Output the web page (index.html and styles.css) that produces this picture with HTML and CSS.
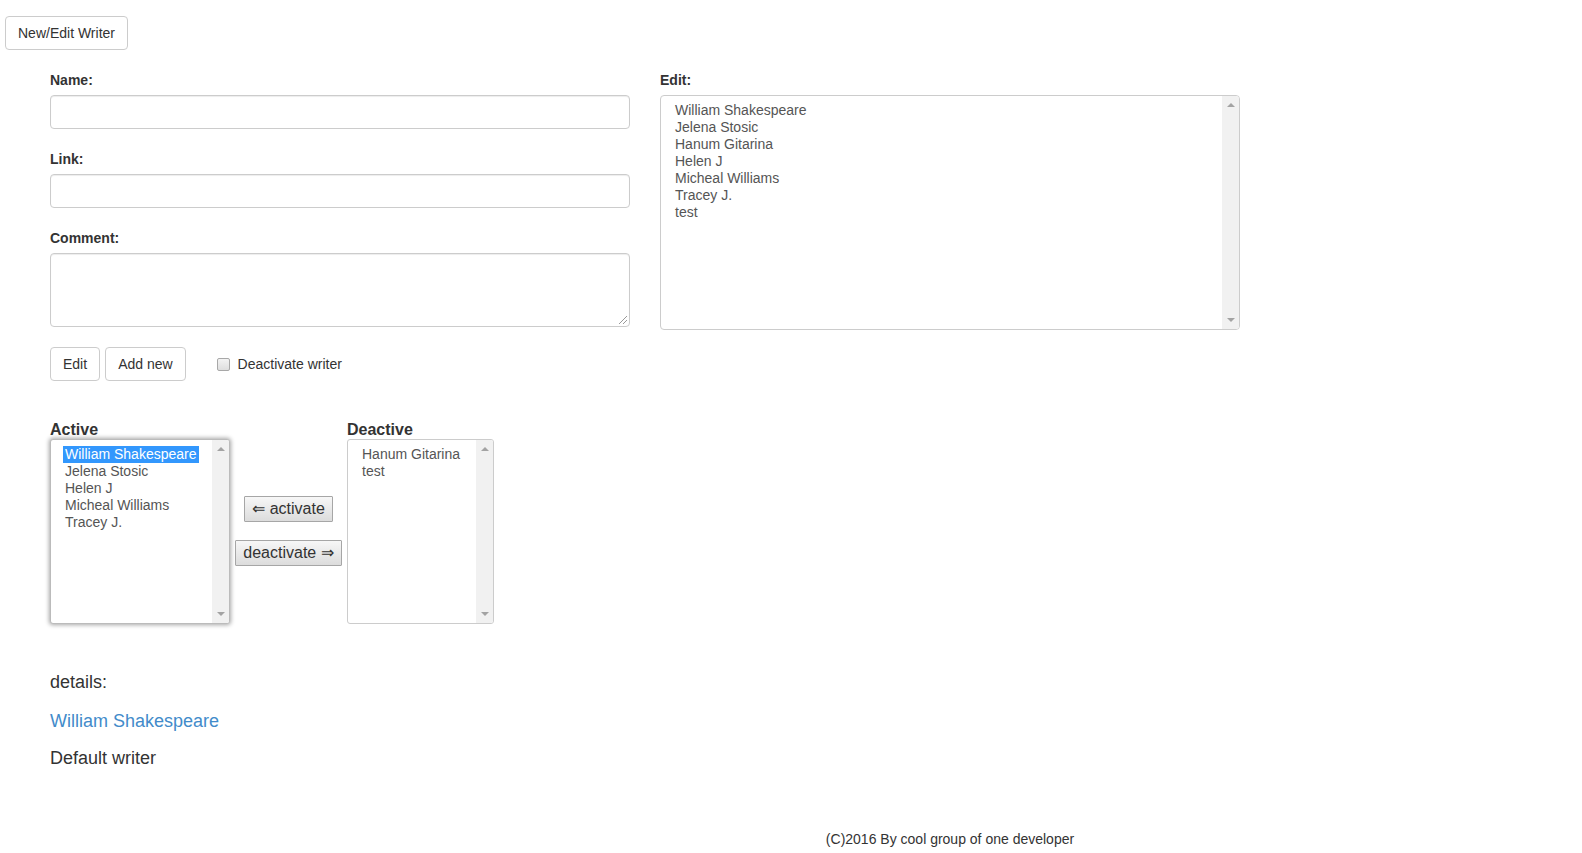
FILE: index.html
```html
<!DOCTYPE html>
<html>
<head>
<meta charset="utf-8">
<title>Writers</title>
<link rel="stylesheet" href="styles.css">
</head>
<body>
<div class="topbar">
  <button class="btn">New/Edit Writer</button>
</div>

<div class="main">
  <div class="form-row">
    <div class="col">
      <div class="group">
        <label class="lbl">Name:</label>
        <div class="input"></div>
      </div>
      <div class="group">
        <label class="lbl">Link:</label>
        <div class="input"></div>
      </div>
      <div class="group">
        <label class="lbl">Comment:</label>
        <div class="textarea"><span class="grip"></span></div>
      </div>
      <div class="actions">
        <button class="btn">Edit</button>
        <button class="btn">Add new</button>
        <span class="check"><span class="box"></span>Deactivate writer</span>
      </div>
    </div>
    <div class="col">
      <div class="group">
        <label class="lbl">Edit:</label>
        <div class="listbox edit-list">
          <div class="items">
            <div class="opt">William Shakespeare</div>
            <div class="opt">Jelena Stosic</div>
            <div class="opt">Hanum Gitarina</div>
            <div class="opt">Helen J</div>
            <div class="opt">Micheal Williams</div>
            <div class="opt">Tracey J.</div>
            <div class="opt">test</div>
          </div>
          <div class="sbar"><span class="up"></span><span class="down"></span></div>
        </div>
      </div>
    </div>
  </div>

  <div class="swap-row">
    <div class="swap-col">
      <div class="swap-title">Active</div>
      <div class="listbox active-list focused">
        <div class="items">
          <div class="opt sel">William Shakespeare</div>
          <div class="opt">Jelena Stosic</div>
          <div class="opt">Helen J</div>
          <div class="opt">Micheal Williams</div>
          <div class="opt">Tracey J.</div>
        </div>
        <div class="sbar"><span class="up"></span><span class="down"></span></div>
      </div>
    </div>
    <div class="swap-buttons">
      <button class="gbtn">&#8656; activate</button>
      <button class="gbtn">deactivate &#8658;</button>
    </div>
    <div class="swap-col">
      <div class="swap-title">Deactive</div>
      <div class="listbox deactive-list">
        <div class="items">
          <div class="opt">Hanum Gitarina</div>
          <div class="opt">test</div>
        </div>
        <div class="sbar"><span class="up"></span><span class="down"></span></div>
      </div>
    </div>
  </div>

  <div class="details">
    <p class="d-title">details:</p>
    <p class="d-link"><a href="#">William Shakespeare</a></p>
    <p class="d-text">Default writer</p>
  </div>
</div>

<footer class="footer">(C)2016 By cool group of one developer</footer>
</body>
</html>
```

FILE: styles.css
```css
html, body {
  margin: 0;
  padding: 0;
  background: #fff;
}
body {
  font-family: "Liberation Sans", Arial, Helvetica, sans-serif;
  font-size: 14px;
  line-height: 20px;
  color: #333;
}
.topbar {
  padding: 16px 0 0 5px;
}
.btn {
  font-family: inherit;
  font-size: 14px;
  line-height: 20px;
  color: #333;
  background: #fff;
  border: 1px solid #ccc;
  border-radius: 4px;
  padding: 6px 12px;
  height: 34px;
  cursor: pointer;
}
.main {
  padding-left: 50px;
}
.form-row {
  display: flex;
  gap: 30px;
  margin-top: 20px;
}
.col {
  width: 580px;
  flex-shrink: 0;
}
.group {
  margin-bottom: 20px;
}
.lbl {
  display: block;
  font-weight: bold;
  margin-bottom: 5px;
  height: 20px;
}
.input {
  height: 32px;
  border: 1px solid #ccc;
  border-radius: 4px;
  box-shadow: inset 0 1px 1px rgba(0,0,0,.075);
}
.textarea {
  position: relative;
  height: 72px;
  border: 1px solid #ccc;
  border-radius: 4px;
  box-shadow: inset 0 1px 1px rgba(0,0,0,.075);
}
.grip {
  position: absolute;
  right: 2px;
  bottom: 2px;
  width: 8px;
  height: 8px;
  background: linear-gradient(135deg, transparent 45%, #999 45%, #999 52%, transparent 52%, transparent 70%, #999 70%, #999 78%, transparent 78%);
}
.actions {
  display: flex;
  align-items: center;
  gap: 5px;
  margin-top: 20px;
}
.check {
  display: flex;
  align-items: center;
  margin-left: 26px;
  color: #333;
}
.box {
  width: 11px;
  height: 11px;
  border: 1px solid #a8a8a8;
  border-radius: 2px;
  background: linear-gradient(#f3f3f3, #dedede);
  margin-right: 8px;
}
.listbox {
  display: flex;
  border: 1px solid #ccc;
  border-radius: 4px;
  background: #fff;
  overflow: hidden;
  color: #555;
}
.listbox .items {
  flex: 1;
  padding: 6px 12px;
  line-height: 17px;
}
.opt {
  padding: 0 2px;
  white-space: nowrap;
}
.opt.sel {
  display: inline-block;
  background: #3297fd;
  color: #fff;
}
.sbar {
  width: 17px;
  background: #f1f1f1;
  display: flex;
  flex-direction: column;
  justify-content: space-between;
  align-items: center;
  padding: 7px 0;
}
.up {
  width: 0;
  height: 0;
  border-left: 4px solid transparent;
  border-right: 4px solid transparent;
  border-bottom: 4px solid #a3a3a3;
}
.down {
  width: 0;
  height: 0;
  border-left: 4px solid transparent;
  border-right: 4px solid transparent;
  border-top: 4px solid #a3a3a3;
}
.edit-list {
  height: 233px;
}
.edit-list .items {
  padding-left: 12px;
}
.swap-row {
  display: flex;
  margin-top: 39px;
}
.swap-title {
  font-size: 16px;
  font-weight: bold;
  line-height: 19px;
  height: 19px;
}
.active-list {
  width: 178px;
  height: 183px;
  border-radius: 3px;
  border-color: #bbb;
}
.focused {
  box-shadow: 0 0 4px 1px rgba(0,0,0,.35);
}
.deactive-list {
  width: 145px;
  height: 183px;
  border-radius: 3px;
}
.swap-buttons {
  width: 117px;
  display: flex;
  flex-direction: column;
  align-items: center;
  justify-content: center;
  gap: 18px;
  margin-top: 17px;
}
.gbtn {
  font-family: inherit;
  font-size: 16px;
  line-height: 18px;
  color: #333;
  padding: 3px 7px;
  height: 26px;
  border: 1px solid #a6a6a6;
  border-radius: 1px;
  background: linear-gradient(#f7f7f7, #dcdcdc);
  cursor: pointer;
}
.details {
  margin-top: 48px;
  font-size: 18px;
}
.details p {
  margin: 0;
  line-height: 20px;
}
.d-link {
  margin-top: 19px !important;
}
.d-text {
  margin-top: 17px !important;
}
.d-link a {
  color: #428bca;
  text-decoration: none;
}
.footer {
  margin-top: 61px;
  padding-left: 318px;
  text-align: center;
  line-height: 20px;
}
```
